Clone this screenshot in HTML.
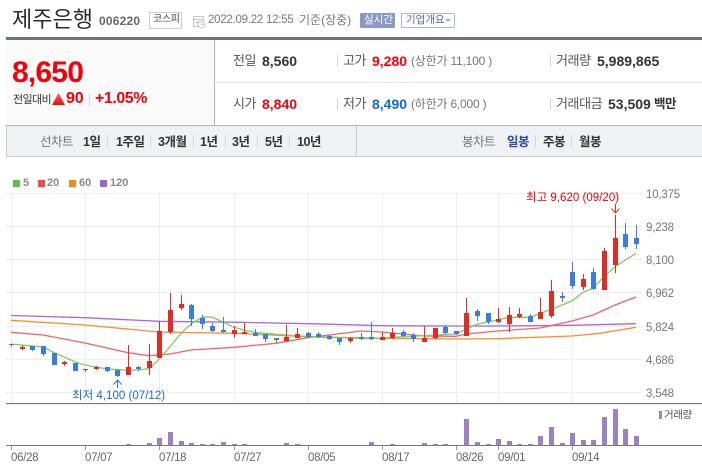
<!DOCTYPE html>
<html lang="ko">
<head>
<meta charset="utf-8">
<title>제주은행</title>
<style>
html,body{margin:0;padding:0;background:#fff;}
#p{position:relative;width:702px;height:473px;overflow:hidden;background:#fff;font-family:"Liberation Sans","Noto Sans CJK KR",sans-serif;color:#333;}
#p div,#p span.a{position:absolute;}
.t{position:absolute;white-space:nowrap;line-height:16px;height:16px;}
.l{font-size:13px;color:#555;letter-spacing:-.4px;}
.v{font-size:14px;font-weight:bold;color:#333;}
.g{font-size:12px;color:#777;letter-spacing:-.2px;}
.tb{font-size:12.5px;font-weight:bold;color:#333;letter-spacing:-.5px;}
.y{font-size:11.5px;color:#777;letter-spacing:-.2px;}
.x{font-size:11.5px;color:#666;letter-spacing:-.3px;}
.lg{font-size:11px;font-weight:bold;color:#888;}
svg{position:absolute;left:0;top:0;}
</style>
</head>
<body>
<div id="p">
<div style="left:6px;top:37px;width:696px;height:3px;background:#6b747e"></div>
<div style="left:6px;top:40px;width:208px;height:85px;background:#fafafa"></div>
<div style="left:214px;top:40px;width:1px;height:85px;background:#b5b5b5"></div>
<div style="left:215px;top:82px;width:487px;height:1px;background:#e6e6e6"></div>
<div style="left:6px;top:125px;width:696px;height:1px;background:#b4b6bb"></div>
<div style="left:6px;top:126px;width:696px;height:30px;background:#f0f1f5"></div>
<div style="left:6px;top:156px;width:696px;height:1px;background:#cbcbd0"></div>
<div style="left:6px;top:126px;width:1px;height:30px;background:#cbcbd0"></div>
<div style="left:356px;top:126px;width:1px;height:30px;background:#cbcbd0"></div>

<span class="t" style="left:12px;top:5px;height:30px;line-height:30px;font-size:22px;color:#2a2a33;">제주은행</span>
<span class="t" style="left:99px;top:13px;font-size:12px;font-weight:bold;color:#666;letter-spacing:.2px;">006220</span>
<div style="left:149px;top:12px;width:31px;height:15px;border:1px solid #ccc;"></div>
<span class="t" style="left:153px;top:12px;font-size:10px;color:#444;letter-spacing:-.3px;">코스피</span>
<svg width="702" height="40" style="left:0;top:0">
<g fill="none" stroke="#c4c6ca" stroke-width="1"><path d="M193.500 16.500h10v5M193.500 16.500v10h5M193.500 19.500h10M195.500 22.500h3"/><circle cx="201.500" cy="24.500" r="3.500" fill="#fff"/><path d="M201.500 22.500v2h2"/></g>
</svg>
<span class="t" style="left:208px;top:12px;font-size:11.500px;color:#777;letter-spacing:-.25px;">2022.09.22 12:55</span>
<span class="t" style="left:299px;top:12px;font-size:12px;color:#777;letter-spacing:0;">기준(장중)</span>
<div style="left:360px;top:13px;width:35px;height:15px;background:#8a9ac6;border-radius:1px"></div>
<span class="t" style="left:364px;top:12px;font-size:10.500px;color:#fff;">실시간</span>
<div style="left:401px;top:13px;width:52px;height:13px;border:1px solid #aab4d8;border-radius:1px;background:#fff"></div>
<span class="t" style="left:406px;top:12px;font-size:10.500px;color:#5a6a9c;">기업개요</span>
<div style="left:445px;top:19px;width:0;height:0;border-left:3px solid transparent;border-right:3px solid transparent;border-top:3px solid #a8b0c8"></div>

<span class="t" style="left:12px;top:56px;height:34px;line-height:34px;font-size:30px;font-weight:bold;color:#f5000a;letter-spacing:-.8px;">8,650</span>
<span class="t" style="left:13px;top:92px;font-size:11px;color:#333;letter-spacing:-.6px;">전일대비</span>
<svg width="702" height="120" style="left:0;top:0"><defs><linearGradient id="tg" x1="0" y1="0" x2="0" y2="1"><stop offset="0" stop-color="#f86a6a"/><stop offset="1" stop-color="#ee0a0a"/></linearGradient></defs><path d="M58.500 93L65 105H52z" fill="url(#tg)"/></svg>
<span class="t" style="left:66px;top:91px;font-size:16px;font-weight:bold;color:#f5000a;letter-spacing:-.2px;">90</span>
<div style="left:89px;top:94px;width:1px;height:12px;background:#d8d8d8"></div>
<span class="t" style="left:95px;top:91px;font-size:16px;font-weight:bold;color:#f5000a;letter-spacing:-.45px;">+1.05%</span>

<span class="t l" style="left:233px;top:53px;">전일</span>
<span class="t v" style="left:262px;top:53px;">8,560</span>
<div style="left:337px;top:55px;width:1px;height:12px;background:#d5d5d5"></div>
<span class="t l" style="left:343px;top:53px;">고가</span>
<span class="t v" style="left:372px;top:53px;color:#f5000a">9,280</span>
<span class="t g" style="left:411px;top:53px;">(상한가 11,100 )</span>
<div style="left:550px;top:55px;width:1px;height:12px;background:#d5d5d5"></div>
<span class="t l" style="left:556px;top:53px;">거래량</span>
<span class="t v" style="left:597px;top:53px;">5,989,865</span>

<span class="t l" style="left:233px;top:96px;">시가</span>
<span class="t v" style="left:262px;top:96px;color:#f5000a">8,840</span>
<div style="left:337px;top:98px;width:1px;height:12px;background:#d5d5d5"></div>
<span class="t l" style="left:343px;top:96px;">저가</span>
<span class="t v" style="left:372px;top:96px;color:#1467e0">8,490</span>
<span class="t g" style="left:411px;top:96px;">(하한가 6,000 )</span>
<div style="left:550px;top:98px;width:1px;height:12px;background:#d5d5d5"></div>
<span class="t l" style="left:556px;top:96px;">거래대금</span>
<span class="t v" style="left:608px;top:96px;">53,509</span>
<span class="t" style="left:654px;top:96px;font-size:12.500px;font-weight:bold;color:#333;letter-spacing:-.5px;">백만</span>

<span class="t tb" style="left:40px;top:134px;color:#777;font-weight:normal">선차트</span>
<span class="t tb" style="left:83px;top:134px;">1일</span>
<span class="t tb" style="left:116px;top:134px;">1주일</span>
<span class="t tb" style="left:158px;top:134px;">3개월</span>
<span class="t tb" style="left:200px;top:134px;">1년</span>
<span class="t tb" style="left:232px;top:134px;">3년</span>
<span class="t tb" style="left:265px;top:134px;">5년</span>
<span class="t tb" style="left:297px;top:134px;">10년</span>
<div style="left:107px;top:135px;width:1px;height:12px;background:#d5d6da"></div>
<div style="left:150px;top:135px;width:1px;height:12px;background:#d5d6da"></div>
<div style="left:193px;top:135px;width:1px;height:12px;background:#d5d6da"></div>
<div style="left:225px;top:135px;width:1px;height:12px;background:#d5d6da"></div>
<div style="left:257px;top:135px;width:1px;height:12px;background:#d5d6da"></div>
<div style="left:289px;top:135px;width:1px;height:12px;background:#d5d6da"></div>
<span class="t tb" style="left:462px;top:134px;color:#777;font-weight:normal">봉차트</span>
<span class="t tb" style="left:507px;top:134px;color:#2b4a9e">일봉</span>
<div style="left:535px;top:135px;width:1px;height:12px;background:#d5d6da"></div>
<span class="t tb" style="left:543px;top:134px;">주봉</span>
<div style="left:571px;top:135px;width:1px;height:12px;background:#d5d6da"></div>
<span class="t tb" style="left:579px;top:134px;">월봉</span>

<div style="left:13px;top:180px;width:7px;height:7px;background:#5cc040"></div>
<span class="t lg" style="left:23px;top:175px;">5</span>
<div style="left:38px;top:180px;width:7px;height:7px;background:#f44a4a"></div>
<span class="t lg" style="left:47px;top:175px;">20</span>
<div style="left:69px;top:180px;width:7px;height:7px;background:#fb8518"></div>
<span class="t lg" style="left:79px;top:175px;">60</span>
<div style="left:100px;top:180px;width:7px;height:7px;background:#a060d0"></div>
<span class="t lg" style="left:110px;top:175px;">120</span>

<svg width="702" height="473" style="left:0;top:0">
<g stroke="#eeeeee" stroke-width="1" shape-rendering="crispEdges" fill="none">
<path d="M6 193.500H642M6 226.500H642M6 259.500H642M6 292.500H642M6 326.500H642M6 359.500H642M6 392.500H642"/>
<path d="M11.500 193V403M85.500 193V403M159.500 193V403M234.500 193V403M308.500 193V403M382.500 193V403M456.500 193V403M498.500 193V403M572.500 193V403"/>
<path d="M6 404.500H702"/>
</g>
<g fill="none" stroke-width="1.300">
<path stroke="#a86ad4" d="M11 315.500L85 317.700L159 321.300L240 322.300L308 323.700L382 325.700L456 326L498 326L572 325.300L636 323.700"/>
<path stroke="#fb8e2a" d="M11 320.300L85 325L159 332L234 333.300L308 336.700L382 338.300L456 339L498 338.700L572 336L600 333.300L636 327.300"/>
<path stroke="#f0646a" d="M11 332.300L43 335L85 343L128 352.700L149 355.700L170 354L191 350L234 347.300L276 343.300L308 337.700L361 331L382 332L424 336L456 336.300L466 334L498 331L540 328L572 321L593 315L615 305L636 297"/>
<path stroke="#7fcc62" d="M11 344L32 346L43 346.700L54 352.700L75 361.700L85 365L96 367L107 369L128 370.300L138 370L149 368.700L159 359.300L170 346.700L181 333.300L191 324L202 317.300L212 317L223 322L234 327.300L244 330L255 332.300L276 334.300L308 336.700L339 337.700L371 338.700L392 337.300L424 335.700L456 334L477 324.300L488 322L509 317.300L530 317.300L551 309.300L572 301L583 292.300L593 288.300L604 276.700L615 266.700L636 253.300"/>
</g>
<path stroke="#3b7ce2" stroke-width="1" fill="none" shape-rendering="crispEdges" d="M11.500 344V347M32.500 346V351M43.500 346V356M107.500 367V372M117.500 370V377M138.500 366V371M191.500 304V326M202.500 315V329M212.500 323V332M223.500 317V333M255.500 329V336M265.500 334V342M276.500 338V343M308.500 332V338M318.500 332V338M329.500 335V340M339.500 338V345M361.500 333V340M371.500 322V340M403.500 330V337M413.500 333V342M445.500 325V334M456.500 331V335M477.500 309V321M488.500 313V324M530.500 314V322M562.500 292V302M572.500 262V289M593.500 268V290M625.500 223V249M636.500 225V249"/>
<path fill="#3b7ce2" shape-rendering="crispEdges" d="M9 344h5v1h-5zM30 346h5v4h-5zM41 346h5v8h-5zM52 353h5v12h-5zM73 363h5v8h-5zM105 367h5v4h-5zM115 370h5v6h-5zM136 367h5v2h-5zM189 305h5v14h-5zM200 318h5v6h-5zM210 326h5v5h-5zM221 330h5v2h-5zM253 333h5v3h-5zM263 334h5v5h-5zM274 338h5v2h-5zM306 333h5v4h-5zM316 334h5v3h-5zM327 336h5v3h-5zM337 338h5v4h-5zM359 337h5v2h-5zM369 337h5v2h-5zM401 332h5v4h-5zM411 335h5v4h-5zM443 327h5v6h-5zM454 331h5v3h-5zM475 311h5v5h-5zM486 313h5v9h-5zM528 316h5v6h-5zM560 296h5v2h-5zM570 272h5v14h-5zM591 272h5v17h-5zM623 234h5v13h-5zM634 238h5v6h-5z"/>
<path stroke="#e12b24" stroke-width="1" fill="none" shape-rendering="crispEdges" d="M22.500 345V350M64.500 361V366M85.500 369V372M96.500 366V370M128.500 345V375M149.500 344V375M159.500 321V358M170.500 293V334M181.500 295V310M234.500 326V338M244.500 323V334M286.500 325V342M297.500 328V338M350.500 337V343M382.500 332V340M392.500 328V339M424.500 326V342M435.500 328V339M466.500 298V336M498.500 308V323M509.500 307V332M519.500 308V318M540.500 298V319M551.500 280V318M583.500 274V290M604.500 248V290M615.500 215V273"/>
<path fill="#e12b24" shape-rendering="crispEdges" d="M20 347h5v2h-5zM62 362h5v2h-5zM83 369h5v1h-5zM94 367h5v2h-5zM126 367h5v8h-5zM147 361h5v7h-5zM157 331h5v27h-5zM168 310h5v22h-5zM179 304h5v4h-5zM232 330h5v4h-5zM242 332h5v2h-5zM284 337h5v4h-5zM295 334h5v4h-5zM348 338h5v3h-5zM380 337h5v3h-5zM390 333h5v5h-5zM422 338h5v4h-5zM433 328h5v10h-5zM464 313h5v23h-5zM496 319h5v3h-5zM507 315h5v9h-5zM517 314h5v3h-5zM538 312h5v7h-5zM549 291h5v25h-5zM581 279h5v8h-5zM602 251h5v39h-5zM613 238h5v27h-5z"/>
<path stroke="#e12b24" stroke-width="1" fill="none" d="M615.500 204V213M611.500 208.500L615.500 213L619.500 208.500"/>
<path stroke="#2f74d8" stroke-width="1" fill="none" d="M117.500 388V380M113.500 384.500L117.500 380L121.500 384.500"/>
<g fill="#9b82c4" shape-rendering="crispEdges">
<path d="M126 444h5v1h-5zM147 443h5v2h-5zM157 438h5v7h-5zM168 432h5v13h-5zM179 441h5v4h-5zM189 443h5v2h-5zM200 444h5v1h-5zM210 444h5v1h-5zM221 442h5v3h-5zM232 444h5v1h-5zM242 444h5v1h-5zM284 443h5v2h-5zM295 444h5v1h-5zM369 442h5v3h-5zM390 444h5v1h-5zM422 443h5v2h-5zM433 444h5v1h-5zM443 444h5v1h-5zM464 419h5v26h-5zM475 442h5v3h-5zM486 444h5v1h-5zM496 439h5v6h-5zM507 441h5v4h-5zM517 444h5v1h-5zM528 444h5v1h-5zM538 436h5v9h-5zM549 427h5v18h-5zM560 443h5v2h-5zM570 433h5v12h-5zM581 440h5v5h-5zM591 440h5v5h-5zM602 417h5v28h-5zM613 409h5v36h-5zM623 429h5v16h-5zM634 436h5v9h-5z"/>
<path d="M659 411h3v8h-3z"/>
</g>
<g stroke="#777" shape-rendering="crispEdges" fill="none">
<path d="M6 403.500H702" stroke="#777"/>
<path d="M6 445.500H702" stroke="#777"/>
<path d="M11.500 446V450M85.500 446V450M159.500 446V450M234.500 446V450M308.500 446V450M382.500 446V450M456.500 446V450M498.500 446V450M572.500 446V450" stroke="#999"/>
</g>
</svg>

<span class="t y" style="left:646px;top:187px;">10,375</span>
<span class="t y" style="left:646px;top:220px;">9,238</span>
<span class="t y" style="left:646px;top:253px;">8,100</span>
<span class="t y" style="left:646px;top:286px;">6,962</span>
<span class="t y" style="left:646px;top:320px;">5,824</span>
<span class="t y" style="left:646px;top:353px;">4,686</span>
<span class="t y" style="left:646px;top:386px;">3,548</span>

<span class="t" style="left:526px;top:190px;font-size:11.500px;color:#e8000a;letter-spacing:.02px;">최고 9,620 (09/20)</span>
<span class="t" style="left:72px;top:388px;font-size:11.500px;color:#1e68d0;letter-spacing:.02px;">최저 4,100 (07/12)</span>
<span class="t" style="left:664px;top:407px;font-size:10.500px;color:#555;letter-spacing:-.4px;">거래량</span>

<span class="t x" style="left:11px;top:450px;">06/28</span>
<span class="t x" style="left:85px;top:450px;">07/07</span>
<span class="t x" style="left:159px;top:450px;">07/18</span>
<span class="t x" style="left:234px;top:450px;">07/27</span>
<span class="t x" style="left:308px;top:450px;">08/05</span>
<span class="t x" style="left:382px;top:450px;">08/17</span>
<span class="t x" style="left:456px;top:450px;">08/26</span>
<span class="t x" style="left:498px;top:450px;">09/01</span>
<span class="t x" style="left:572px;top:450px;">09/14</span>
</div>
</body>
</html>
